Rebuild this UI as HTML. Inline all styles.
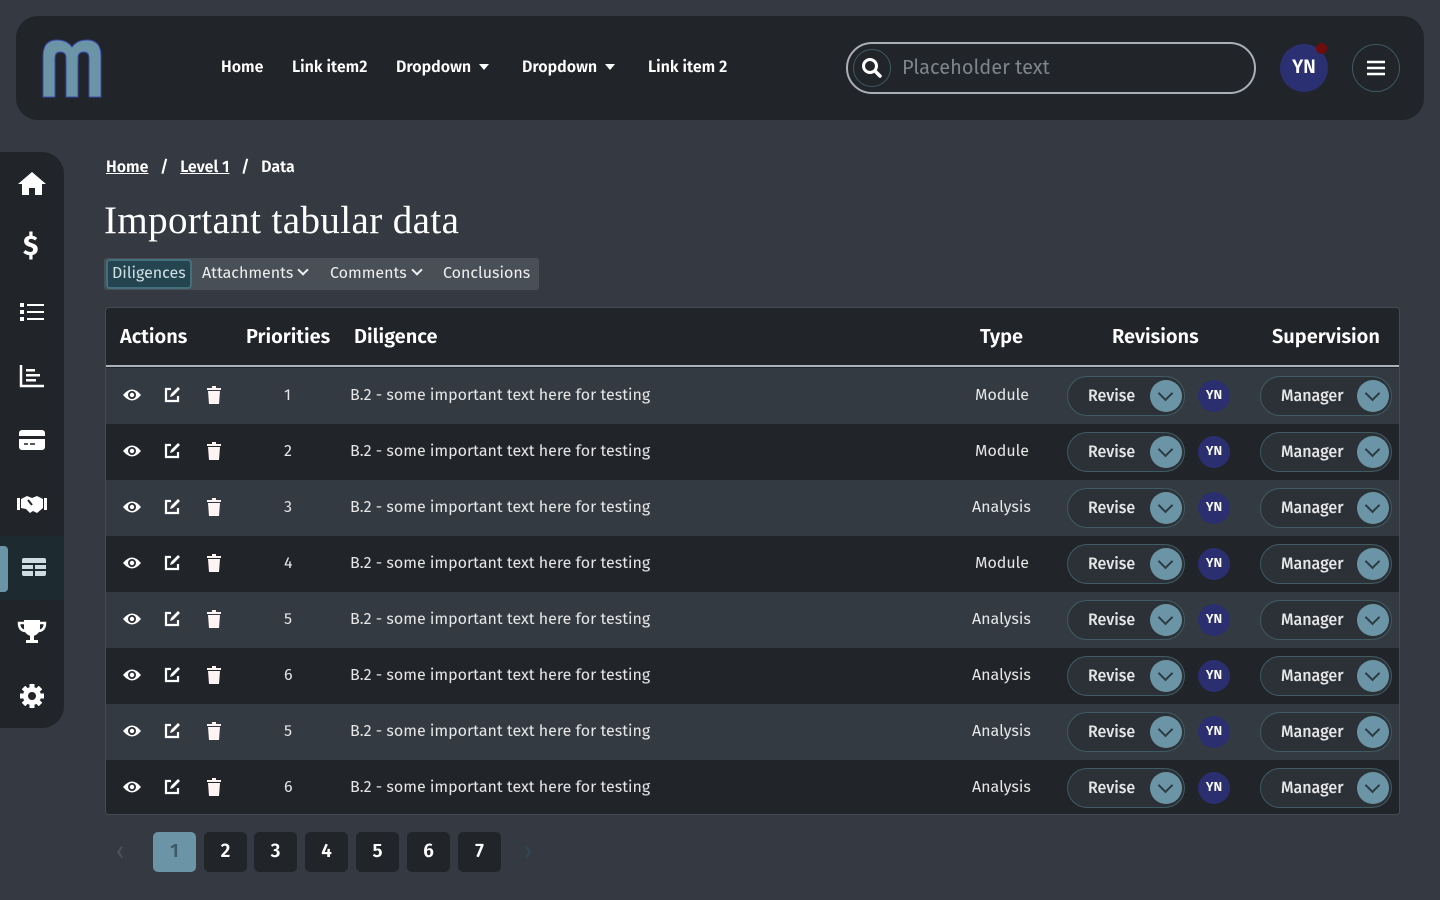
<!DOCTYPE html>
<html><head><meta charset="utf-8"><style>
*{box-sizing:border-box;margin:0;padding:0}
body{width:1440px;height:900px;background:#353a42;font-family:"Fira Sans","Liberation Sans",sans-serif;color:#fff;position:relative;overflow:hidden}
.abs{position:absolute}
.hdr{left:16px;top:16px;width:1408px;height:104px;background:#212428;border-radius:22px}
.nav{top:58px;font-size:16px;font-weight:600}
.car{display:inline-block;width:0;height:0;border-left:5px solid transparent;border-right:5px solid transparent;border-top:6px solid #fff;margin-left:8px;vertical-align:2px}
.chev{display:inline-block;width:8px;height:8px;border-right:2px solid #eee;border-bottom:2px solid #eee;transform:rotate(45deg);margin-left:6px;vertical-align:4px}
.side{left:0;top:152px;width:64px;height:576px;background:#212428;border-radius:0 22px 22px 0}
.side svg{position:absolute;left:16px}
.tbl{left:105px;top:307px;width:1295px;height:508px;border:1px solid #454b53;border-radius:4px;overflow:hidden;background:#212428}
.th{top:0;height:59px;border-bottom:2px solid #a9b3bb;width:100%;background:#212428}
.th span{position:absolute;top:17px;font-size:20px;font-weight:600}
.row{left:0;width:100%;height:56px;font-size:16px;color:#e6e6e6}
.row span{position:absolute;top:18px}
.pill{position:absolute;top:8px;height:40px;border:1px solid #3f5b63;border-radius:20px;background:#2c3137}
.pill b{position:absolute;top:10px;font-weight:500;color:#e6e6e6}
.pill i{position:absolute;right:2px;top:3px;width:32px;height:32px;border-radius:50%;background:#6b95a6}
.pill i:after{content:"";position:absolute;left:10px;top:8px;width:9px;height:9px;border-right:2px solid #2c3a44;border-bottom:2px solid #2c3a44;transform:rotate(45deg)}
.yn{position:absolute;left:1092px;top:12px;width:32px;height:32px;border-radius:50%;background:#2b2f70;font-size:13px;font-weight:600;text-align:center;line-height:32px;color:#fff}
.ic{position:absolute;top:19px}
.pg{top:832px;width:43px;height:40px;border-radius:5px;background:#212428;font-size:19px;font-weight:600;text-align:center;line-height:40px}
</style></head><body>
<div class="abs hdr"></div>
<svg class="abs" style="left:42px;top:38px" width="60" height="60" viewBox="0 0 60 60"><path d="M1 59V18Q1 2 15 2Q25 2 30 9Q35 2 45 2Q59 2 59 18V59H47V20Q47 14 42 14Q36 14 36 20V59H24V20Q24 14 18 14Q13 14 13 20V59Z" fill="#6b95a6" stroke="#3a4ab0" stroke-width="1"/></svg>
<div class="abs nav" style="left:221px">Home</div>
<div class="abs nav" style="left:292px">Link item2</div>
<div class="abs nav" style="left:396px">Dropdown<span class="car"></span></div>
<div class="abs nav" style="left:522px">Dropdown<span class="car"></span></div>
<div class="abs nav" style="left:648px">Link item 2</div>
<div class="abs" style="left:846px;top:42px;width:410px;height:52px;border:2px solid #a9b0b8;border-radius:26px"></div>
<div class="abs" style="left:853px;top:49px;width:38px;height:38px;border:1px solid #3f5b63;border-radius:50%"></div>
<svg class="abs" style="left:861px;top:57px" width="22" height="22" viewBox="0 0 22 22"><circle cx="9" cy="9" r="6.5" fill="none" stroke="#fff" stroke-width="3"/><path d="M14 14l5 5" stroke="#fff" stroke-width="3.5" stroke-linecap="round"/></svg>
<div class="abs" style="left:902px;top:56px;font-size:20px;color:#7d858c">Placeholder text</div>
<div class="abs" style="left:1280px;top:44px;width:48px;height:48px;border-radius:50%;background:#2b3072;font-size:19px;font-weight:600;text-align:center;line-height:48px">YN</div>
<div class="abs" style="left:1316px;top:43px;width:11px;height:11px;border-radius:50%;background:#6e0d0d"></div>
<div class="abs" style="left:1352px;top:44px;width:48px;height:48px;border-radius:50%;border:1px solid #3f5b63"></div>
<svg class="abs" style="left:1367px;top:60px" width="18" height="16"><path d="M0 2h18M0 8h18M0 14h18" stroke="#fff" stroke-width="2.6"/></svg>

<div class="abs side">
<svg style="top:16px" width="32" height="32" viewBox="0 0 32 32"><path d="M16 4L2 16h4v11h7v-7h6v7h7V16h4z" fill="#fff"/></svg>
<div class="abs" style="left:23px;top:78px;font-size:28px;font-weight:700">$</div>
<svg style="top:144px" width="32" height="32" viewBox="0 0 32 32"><path d="M4 7h4v4H4zM4 14h4v4H4zM4 21h4v4H4zM11 8h17v2H11zM11 15h17v2H11zM11 22h17v2H11z" fill="#fff"/></svg>
<svg style="top:208px" width="32" height="32" viewBox="0 0 32 32"><path d="M5 5v21h23" stroke="#fff" stroke-width="2.5" fill="none"/><path d="M10 9h9v2.5h-9zM10 14h14v2.5H10zM10 19h10v2.5H10z" fill="#fff"/></svg>
<svg style="top:272px" width="32" height="32" viewBox="0 0 32 32"><rect x="3" y="6" width="26" height="20" rx="3" fill="#fff"/><rect x="3" y="12" width="26" height="3" fill="#212428"/><path d="M8 20h4M14 20h5" stroke="#212428" stroke-width="1.5"/></svg>
<svg style="top:336px" width="32" height="32" viewBox="0 0 32 32"><path d="M1 10h3v12H1zM28 10h3v12h-3zM5 11l6-3 5 2 5-2 6 3v9l-6 5-4-2-3 2-4-4-5-1z" fill="#fff"/><path d="M12 12l4 5" stroke="#212428" stroke-width="2"/></svg>
<div class="abs" style="left:0;top:384px;width:64px;height:64px;background:#1d2a30"></div>
<div class="abs" style="left:0;top:394px;width:8px;height:46px;background:#6b95a6;border-radius:0 4px 4px 0"></div>
<svg style="top:400px;left:21px" width="28" height="30" viewBox="0 0 28 30"><rect x="1" y="6" width="24" height="18" rx="2" fill="#cfdde2"/><path d="M1 12h24M1 18h24M13 12v12" stroke="#1d2a30" stroke-width="2"/></svg>
<svg style="top:464px" width="32" height="32" viewBox="0 0 32 32"><path d="M8 4h16v8a8 8 0 01-16 0zM14 19h4v5h4v3H10v-3h4z" fill="#fff"/><path d="M8 7H3q0 7 6 8M24 7h5q0 7-6 8" stroke="#fff" stroke-width="2.5" fill="none"/></svg>
<svg style="top:528px" width="32" height="32" viewBox="0 0 32 32"><circle cx="16" cy="16" r="9" fill="#fff"/><g stroke="#fff" stroke-width="5"><path d="M16 4v24M4 16h24M7.5 7.5l17 17M24.5 7.5l-17 17"/></g><circle cx="16" cy="16" r="4" fill="#212428"/></svg>
</div>

<div class="abs" style="left:106px;top:158px;font-size:16px;font-weight:600"><u>Home</u>&nbsp;&nbsp; / &nbsp;&nbsp;<u>Level 1</u>&nbsp;&nbsp; / &nbsp;&nbsp;Data</div>
<div class="abs" style="left:104px;top:198px;font-size:39px;font-family:'Liberation Serif',serif;letter-spacing:0.4px">Important tabular data</div>
<div class="abs" style="left:104px;top:258px;width:435px;height:32px;background:#484f57;border-radius:3px"></div>
<div class="abs" style="left:106px;top:259px;width:86px;height:30px;background:#24444f;border:2px solid #44707e;border-radius:4px"></div>
<div class="abs" style="left:112px;top:264px;font-size:16px;color:#cfe0e6">Diligences</div>
<div class="abs" style="left:202px;top:264px;font-size:16px;color:#eee">Attachments<span class="chev"></span></div>
<div class="abs" style="left:330px;top:264px;font-size:16px;color:#eee">Comments<span class="chev"></span></div>
<div class="abs" style="left:443px;top:264px;font-size:16px;color:#eee">Conclusions</div>

<div class="abs tbl">
<div class="abs th"><span style="left:14px">Actions</span><span style="left:140px">Priorities</span><span style="left:248px">Diligence</span><span style="left:874px">Type</span><span style="left:1006px">Revisions</span><span style="left:1166px">Supervision</span></div>
<div id="rows"></div>
</div>

<div class="abs" style="left:116px;top:838px;font-size:24px;color:#4a525a">‹</div>
<div class="abs pg" style="left:153px;background:#6b95a6;color:#3d5966">1</div>
<div class="abs pg" style="left:204px">2</div><div class="abs pg" style="left:254px">3</div><div class="abs pg" style="left:305px">4</div><div class="abs pg" style="left:356px">5</div><div class="abs pg" style="left:407px">6</div><div class="abs pg" style="left:458px">7</div>
<div class="abs" style="left:524px;top:838px;font-size:24px;color:#2b4a55">›</div>
<script>
var p=[1,2,3,4,5,6,5,6],t=["Module","Module","Analysis","Module","Analysis","Analysis","Analysis","Analysis"],h="";
for(var i=0;i<8;i++){h+='<div class="abs row" style="top:'+(60+i*56)+'px;background:'+(i%2?'#212428':'#343a41')+'">'+
'<svg class="ic" style="left:16px;top:18px" width="20" height="18" viewBox="0 0 20 18"><path d="M1 9Q10-2 19 9Q10 20 1 9z" fill="#fff"/><circle cx="10" cy="9" r="4" fill="#2a2e33"/><circle cx="10" cy="9" r="2.2" fill="#fff"/></svg>'+
'<svg class="ic" style="left:57px;top:18px" width="18" height="18" viewBox="0 0 18 18"><path d="M8 3H3v12h12v-5" stroke="#fff" stroke-width="2.2" fill="none"/><path d="M7 11l1-3 7-7 2 2-7 7z" fill="#fff"/></svg>'+
'<svg class="ic" style="left:100px;top:18px" width="16" height="18" viewBox="0 0 16 18"><path d="M1 2h14v2H1zM6 0h4v2H6zM2 5h12l-1 13H3z" fill="#fff4f4"/></svg>'+
'<span style="left:178px">'+p[i]+'</span><span style="left:244px">B.2 - some important text here for testing</span>'+
'<span style="left:'+(t[i]=="Module"?869:866)+'px">'+t[i]+'</span>'+
'<div class="pill" style="left:961px;width:118px"><b style="left:20px">Revise</b><i></i></div><div class="yn">YN</div>'+
'<div class="pill" style="left:1154px;width:132px"><b style="left:20px">Manager</b><i></i></div></div>'}
document.getElementById('rows').innerHTML=h;
</script>
</body></html>
